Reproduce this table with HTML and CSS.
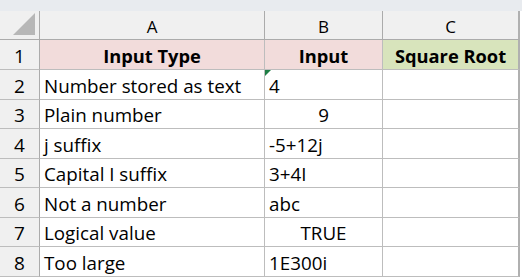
FILE: index.html
```html
<!DOCTYPE html>
<html>
<head>
<meta charset="utf-8">
<link rel="stylesheet" href="styles.css">
</head>
<body>
<div class="topbar"></div>
<div class="sheet">
  <div class="corner"><svg width="22" height="22" viewBox="0 0 22 22"><polygon points="22,0 22,22 0,22" fill="#b7b7b7"/></svg></div>
  <div class="colhead">A</div>
  <div class="colhead">B</div>
  <div class="colhead">C</div>

  <div class="rowhead">1</div>
  <div class="cell hdr pink">Input Type</div>
  <div class="cell hdr pink">Input</div>
  <div class="cell hdr green">Square Root</div>

  <div class="rowhead">2</div>
  <div class="cell">Number stored as text</div>
  <div class="cell flag">4</div>
  <div class="cell"></div>

  <div class="rowhead">3</div>
  <div class="cell">Plain number</div>
  <div class="cell center">9</div>
  <div class="cell"></div>

  <div class="rowhead">4</div>
  <div class="cell">j suffix</div>
  <div class="cell">-5+12j</div>
  <div class="cell"></div>

  <div class="rowhead">5</div>
  <div class="cell">Capital I suffix</div>
  <div class="cell">3+4I</div>
  <div class="cell"></div>

  <div class="rowhead">6</div>
  <div class="cell">Not a number</div>
  <div class="cell">abc</div>
  <div class="cell"></div>

  <div class="rowhead">7</div>
  <div class="cell">Logical value</div>
  <div class="cell center">TRUE</div>
  <div class="cell"></div>

  <div class="rowhead">8</div>
  <div class="cell">Too large</div>
  <div class="cell">1E300i</div>
  <div class="cell"></div>
</div>
</body>
</html>
```
FILE: styles.css
```css
html, body {
  margin: 0;
  padding: 0;
  background: #ffffff;
}
body {
  font-family: "Open Sans", "Liberation Sans", sans-serif;
  color: #000;
  width: 522px;
  height: 278px;
  overflow: hidden;
}
.topbar {
  height: 11px;
  background: #e8ebef;
}
.sheet {
  display: grid;
  grid-template-columns: 40px 225px 118px 137px;
  grid-template-rows: 29px 30px 30px 29px 30px 29px 30px 29px 30px;
  width: 520px;
}
.sheet > div {
  box-sizing: border-box;
  border-right: 1px solid #bdbdbd;
  border-bottom: 1px solid #bdbdbd;
  display: flex;
  align-items: center;
  white-space: nowrap;
  overflow: hidden;
}
.corner {
  background: #f0f0f0;
  justify-content: flex-end;
  align-items: flex-end !important;
  padding: 0 4px 4px 0;
  border-right: 1px solid #ababab !important;
  border-bottom: 1px solid #ababab !important;
}
.corner svg { display: block; }
.colhead {
  background: #f0f0f0;
  justify-content: center;
  font-size: 17px;
  padding-top: 2px;
  border-bottom: 1px solid #ababab !important;
  border-right: 1px solid #ababab !important;
}
.sheet > .colhead:nth-child(4) {
  border-right: 2px solid #b0b0b0 !important;
}
.rowhead {
  background: #f0f0f0;
  justify-content: center;
  font-size: 19px;
  padding-top: 2px;
  border-right: 1px solid #ababab !important;
}
.cell {
  font-size: 18.8px;
  padding-left: 4px;
  padding-top: 2px;
}
.cell:nth-child(4n) {
  border-right: 2px solid #b0b0b0 !important;
}
.hdr {
  font-weight: 700;
  font-size: 18.3px;
  justify-content: center;
  padding-left: 0;
}
.pink { background: #f2dcdb; }
.green { background: #d8e4bc; }
.center {
  justify-content: center;
  padding-left: 0;
}
.flag {
  position: relative;
}
.flag::before {
  content: "";
  position: absolute;
  left: 0;
  top: 0;
  width: 0;
  height: 0;
  border-top: 6px solid #1e7e45;
  border-right: 6px solid transparent;
}
```
